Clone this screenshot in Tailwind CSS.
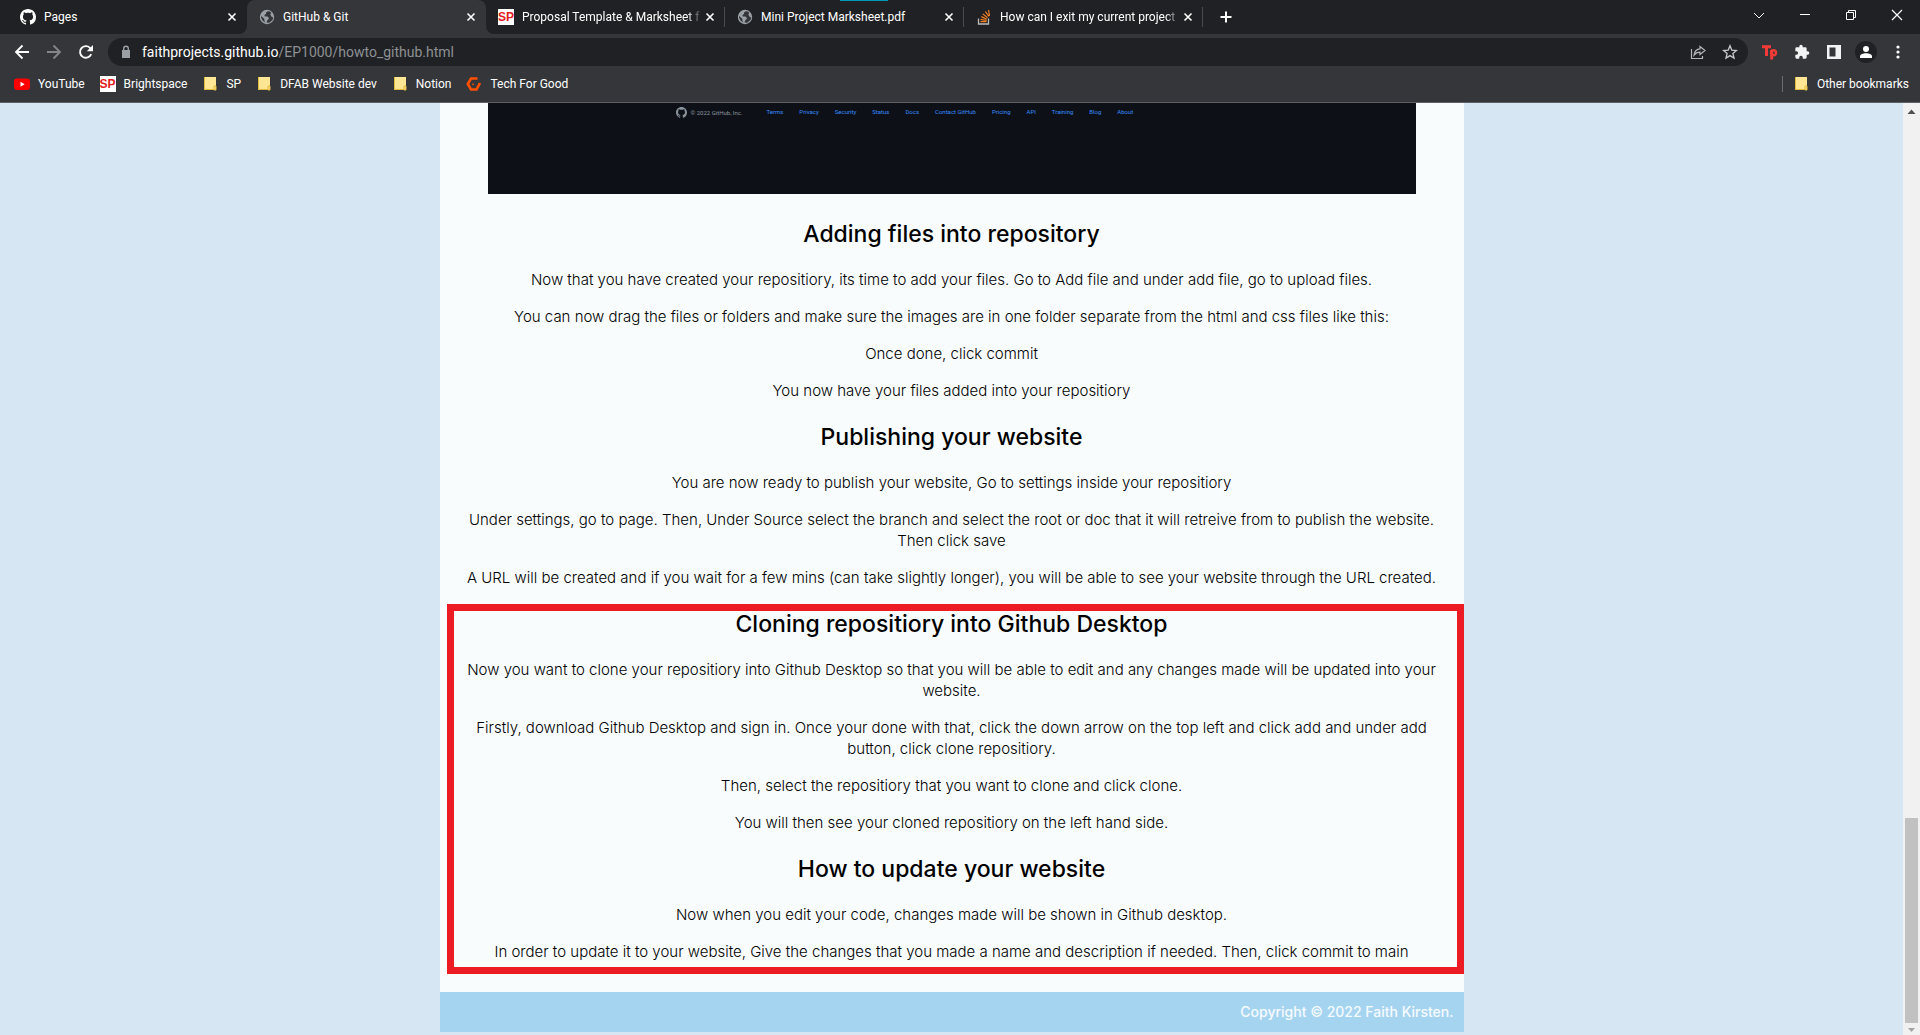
<!DOCTYPE html>
<html lang="en">
<head>
<meta charset="utf-8">
<title>GitHub &amp; Git</title>
<script src="https://cdn.jsdelivr.net/npm/@tailwindcss/browser@4"></script>
</head>
<body class="flex h-screen flex-col overflow-hidden bg-[#d6e6f3] font-[Roboto,sans-serif] text-xs text-white">
<svg class="hidden">
  <symbol id="octocat" viewBox="0 0 16 16"><path d="M8 0C3.58 0 0 3.58 0 8c0 3.54 2.29 6.53 5.47 7.59.4.07.55-.17.55-.38 0-.19-.01-.82-.01-1.49-2.01.37-2.53-.49-2.69-.94-.09-.23-.48-.94-.82-1.13-.28-.15-.68-.52-.01-.53.63-.01 1.08.58 1.23.82.72 1.21 1.87.87 2.33.66.07-.52.28-.87.51-1.07-1.78-.2-3.64-.89-3.64-3.95 0-.87.31-1.59.82-2.15-.08-.2-.36-1.02.08-2.12 0 0 .67-.21 2.2.82.64-.18 1.32-.27 2-.27s1.36.09 2 .27c1.53-1.04 2.2-.82 2.2-.82.44 1.1.16 1.92.08 2.12.51.56.82 1.27.82 2.15 0 3.07-1.87 3.75-3.65 3.95.29.25.54.73.54 1.48 0 1.07-.01 1.93-.01 2.2 0 .21.15.46.55.38A8.01 8.01 0 0 0 16 8c0-4.42-3.58-8-8-8z"/></symbol>
  <symbol id="globe" viewBox="0 0 16 16"><circle cx="8" cy="8" r="7.2" fill="#9aa0a6"/><path d="M9 2.2 7 3.4v1.5L5.4 6l.4 1.4h2.6l1.4 1.4-.2 1.5-1.3.9-.8 2.4 2.6.1 3.4-2.6.7-2.7-1.6-.6-1.3-2.4 1-1.6-1.5-1.2zM2.2 7l3.3 3.1-.2 1.5 1 1.8-2.6-1.6L2 8.6z" fill="#35363a"/></symbol>
  <symbol id="close" viewBox="0 0 16 16"><path d="m4.5 4.5 7 7m0-7-7 7" stroke="#fff" stroke-width="1.6"/></symbol>
  <symbol id="folder" viewBox="0 0 16 16"><path d="M2 1h12v13H2z" fill="#ffe694"/><path d="M2.5 1v12.5h9M12 10v4h2v-4z" fill="none" stroke="#e3b93c"/></symbol>
</svg>
<header class="shrink-0 border-b border-[#5f6064] bg-[#35363a]">
  <div class="relative flex h-[34px] bg-[#35363a]">
    <span class="absolute left-[840px] top-0 h-px w-12 bg-[#0099bc]"></span>
    <div class="flex w-[247px] items-center gap-2 rounded-br-lg bg-[#202124] pl-5 pr-[7px]">
      <svg class="size-4 fill-white"><use href="#octocat"/></svg>
      <span class="flex-1 overflow-hidden whitespace-nowrap">Pages</span>
      <button aria-label="Close tab"><svg class="size-4"><use href="#close"/></svg></button>
    </div>
    <div class="bg-[#202124]">
      <div class="flex h-full w-[239px] items-center gap-2 rounded-t-lg bg-[#35363a] pl-3 pr-[7px]">
        <svg class="size-4"><use href="#globe"/></svg>
        <span class="flex-1 overflow-hidden whitespace-nowrap">GitHub &amp; Git</span>
        <button aria-label="Close tab"><svg class="size-4"><use href="#close"/></svg></button>
      </div>
    </div>
    <div class="flex flex-1 rounded-bl-lg bg-[#202124]">
      <div class="flex w-[239px] items-center gap-2 pl-3 pr-[7px]">
        <span class="flex size-4 items-center justify-center bg-white font-['Liberation_Sans',sans-serif] text-xs font-bold text-[#e31b23]">SP</span>
        <span class="-mr-2 flex-1 overflow-hidden whitespace-nowrap mask-r-from-92%">Proposal Template &amp; Marksheet f</span>
        <button aria-label="Close tab"><svg class="size-4"><use href="#close"/></svg></button>
      </div>
      <span class="-ml-px h-5 w-px self-center bg-[#4a4b4f]"></span>
      <div class="flex w-[239px] items-center gap-2 pl-3 pr-[7px]">
        <svg class="size-4"><use href="#globe"/></svg>
        <span class="flex-1 overflow-hidden whitespace-nowrap">Mini Project Marksheet.pdf</span>
        <button aria-label="Close tab"><svg class="size-4"><use href="#close"/></svg></button>
      </div>
      <span class="-ml-px h-5 w-px self-center bg-[#4a4b4f]"></span>
      <div class="flex w-[239px] items-center gap-2 pl-3 pr-[7px]">
        <svg class="size-4" viewBox="0 0 16 16" fill="none"><path d="M2.500 9.500V15h10V9.500" stroke="#bcbbbb" stroke-width="1.300"/><path d="M4.500 12.700h6M4.600 10.300l6 1.200M5.300 7.600l5.500 2.600M6.800 4.900l4.700 3.900M9.300 2.500l3.600 4.900M12.500 1l1 6" stroke="#f48024" stroke-width="1.200"/></svg>
        <span class="-mr-2 flex-1 overflow-hidden whitespace-nowrap mask-r-from-92%">How can I exit my current project</span>
        <button aria-label="Close tab"><svg class="size-4"><use href="#close"/></svg></button>
      </div>
      <span class="-ml-px h-5 w-px self-center bg-[#4a4b4f]"></span>
      <button aria-label="New tab" class="ml-[15px]"><svg class="size-4" viewBox="0 0 16 16"><path d="M8 2.500v11M2.500 8h11" stroke="#fff" stroke-width="2"/></svg></button>
      <div class="ml-auto flex items-center gap-[30px] pr-[15px]">
        <button aria-label="Search tabs"><svg class="size-4" viewBox="0 0 16 16" fill="none" stroke="#fff"><path d="m3 4 5 5 5-5"/></svg></button>
        <button aria-label="Minimize"><svg class="size-4" viewBox="0 0 16 16" stroke="#fff"><path d="M3 5.500h10"/></svg></button>
        <button aria-label="Restore"><svg class="size-4" viewBox="0 0 16 16" fill="none" stroke="#fff"><path d="M3.500 3.500h7v7h-7zM5.500 3.500v-2h7v7h-2"/></svg></button>
        <button aria-label="Close"><svg class="size-4" viewBox="0 0 16 16" stroke="#fff" stroke-width="1.200"><path d="m3 1 10 10M13 1 3 11"/></svg></button>
      </div>
    </div>
  </div>
  <div class="flex h-9 items-center gap-4 px-[14px]">
    <button aria-label="Back"><svg class="size-4" viewBox="0 0 16 16" fill="none" stroke="#fff" stroke-width="1.800"><path d="M15 8H2M8.500 1.500 2 8l6.500 6.500"/></svg></button>
    <button aria-label="Forward"><svg class="size-4" viewBox="0 0 16 16" fill="none" stroke="#85868a" stroke-width="1.800"><path d="M1 8h13M7.500 1.500 14 8l-6.500 6.500"/></svg></button>
    <button aria-label="Reload"><svg class="size-4" viewBox="0 0 16 16"><path d="M13.200 10.200A5.800 5.800 0 1 1 12 3.900l1.500 1.600" fill="none" stroke="#fff" stroke-width="1.900"/><path d="M15 1v6.200H8.800z" fill="#fff"/></svg></button>
    <div class="-ml-0.5 flex h-7 flex-1 items-center rounded-full bg-[#202124] px-[10px]">
      <svg class="size-4" viewBox="0 0 16 16"><path d="M4 6h8v8H4z" fill="#9aa0a6"/><path d="M5.700 6.500V4.600a2.300 2.300 0 0 1 4.600 0v1.900" fill="none" stroke="#9aa0a6" stroke-width="1.400"/></svg>
      <span class="ml-2 flex-1 text-sm text-[#8d9094]"><span class="text-white">faithprojects.github.io</span>/EP1000/howto_github.html</span>
      <button aria-label="Share" class="mr-4"><svg class="size-4" viewBox="0 0 16 16" fill="none" stroke="#b4b7ba" stroke-width="1.200"><path d="M1.500 5v9.500h11V12"/><path d="M10 2.500 15 6.500l-5 4V8.200c-3 0-4.500 1-6 3 .4-3.500 2.400-6 6-6.300z"/></svg></button>
      <button aria-label="Bookmark"><svg class="size-4" viewBox="0 0 16 16" fill="none" stroke="#c6c8ca" stroke-width="1.300"><path d="m8 1.800 1.800 4.300 4.600.4-3.500 3 1.100 4.600-4-2.500-4 2.500 1.100-4.600-3.500-3 4.600-.4z"/></svg></button>
    </div>
    <button aria-label="Tp extension" class="-ml-[2px]"><svg class="size-4" viewBox="0 0 16 16" fill="none" stroke="#f23b36" stroke-width="3"><path d="M0 2.700h9M4.500 2v10M9.700 6v9.500"/><circle cx="11.500" cy="8.800" r="2.500" stroke-width="2.400"/></svg></button>
    <button aria-label="Extensions"><svg class="size-4" viewBox="0 0 24 24" fill="#f1f3f4"><path d="M20.500 11H19V7a2 2 0 0 0-2-2h-4V3.500a2.500 2.500 0 0 0-5 0V5H4a2 2 0 0 0-2 2v3.800h1.500a2.700 2.700 0 0 1 0 5.400H2V20a2 2 0 0 0 2 2h3.800v-1.500a2.700 2.700 0 0 1 5.400 0V22H17a2 2 0 0 0 2-2v-4h1.500a2.500 2.500 0 0 0 0-5z"/></svg></button>
    <button aria-label="Side panel"><svg class="size-4" viewBox="0 0 16 16"><path d="M1 1h14v14H1z" fill="#f1f3f4"/><path d="M3.500 3.500h6v9h-6z" fill="#35363a"/></svg></button>
    <button aria-label="Profile" class="-mx-[3px]"><svg class="size-[22px]" viewBox="0 0 22 22"><circle cx="11" cy="11" r="11" fill="#202124"/><circle cx="11" cy="8" r="3" fill="#fff"/><path d="M5 17v-1.500c0-2 3-3.200 6-3.200s6 1.200 6 3.200V17z" fill="#fff"/></svg></button>
    <button aria-label="Menu"><svg class="size-4 fill-white" viewBox="0 0 16 16"><circle cx="8" cy="3" r="1.600"/><circle cx="8" cy="8" r="1.600"/><circle cx="8" cy="13" r="1.600"/></svg></button>
  </div>
  <nav class="flex h-8 items-center gap-[15px] whitespace-nowrap pb-1 pl-[14px] pr-[11px]">
    <a href="#" class="flex items-center gap-2"><svg class="size-4" viewBox="0 0 16 16"><rect y="2.500" width="16" height="11.500" rx="3" fill="#f00"/><path d="m6.500 5.800 4.200 2.500-4.200 2.500z" fill="#fff"/></svg>YouTube</a>
    <a href="#" class="flex items-center gap-2"><span class="flex size-4 items-center justify-center bg-white font-['Liberation_Sans',sans-serif] text-xs font-bold text-[#e31b23]">SP</span>Brightspace</a>
    <a href="#" class="flex items-center gap-2"><svg class="size-4"><use href="#folder"/></svg>SP</a>
    <a href="#" class="flex items-center gap-2"><svg class="size-4"><use href="#folder"/></svg>DFAB Website dev</a>
    <a href="#" class="flex items-center gap-2"><svg class="size-4"><use href="#folder"/></svg>Notion</a>
    <a href="#" class="flex items-center gap-2"><svg class="size-4" viewBox="0 0 16 16" fill="none" stroke="#ff4f00" stroke-width="2.600"><path d="M11.500 2.500H5L1.800 8 5 13.500h5.500L14 7"/><circle cx="7" cy="8.300" r=".6" stroke-width="1"/></svg>Tech For Good</a>
    <a href="#" class="ml-auto flex items-center gap-2 border-l border-[#6b6c70] pl-[10px]"><svg class="size-4"><use href="#folder"/></svg>Other bookmarks</a>
  </nav>
</header>
<div class="flex min-h-0 flex-1">
  <main class="flex-1 overflow-hidden">
    <div class="mx-auto max-w-[1024px] bg-[#f8fcfd] text-center font-[Inter,sans-serif] text-[15px]/[21px] font-light text-black">
      <div class="mx-12 flex h-[91px] items-start gap-4 whitespace-nowrap bg-[#0d1117] pl-[188px] pt-1 font-[Roboto,sans-serif] text-[6px]/[10px] font-normal text-[#388bfd]">
        <span class="mr-2 flex items-center gap-1 text-[#8b949e]"><svg class="size-[11px] fill-[#8b949e]"><use href="#octocat"/></svg>© 2022 GitHub, Inc.</span>
        <a href="#">Terms</a><a href="#">Privacy</a><a href="#">Security</a><a href="#">Status</a><a href="#">Docs</a><a href="#">Contact GitHub</a><a href="#">Pricing</a><a href="#">API</a><a href="#">Training</a><a href="#">Blog</a><a href="#">About</a>
      </div>
      <section class="space-y-4 pt-[25px]">
        <h2 class="mb-5 text-[23px]/[30px] font-medium">Adding files into repository</h2>
        <p>Now that you have created your repositiory, its time to add your files. Go to Add file and under add file, go to upload files.</p>
        <p>You can now drag the files or folders and make sure the images are in one folder separate from the html and css files like this:</p>
        <p>Once done, click commit</p>
        <p>You now have your files added into your repositiory</p>
      </section>
      <section class="space-y-4 pt-[21px]">
        <h2 class="mb-5 text-[23px]/[30px] font-medium">Publishing your website</h2>
        <p>You are now ready to publish your website, Go to settings inside your repositiory</p>
        <p>Under settings, go to page. Then, Under Source select the branch and select the root or doc that it will retreive from to publish the website.<br>Then click save</p>
        <p>A URL will be created and if you wait for a few mins (can take slightly longer), you will be able to see your website through the URL created.</p>
      </section>
      <div class="relative mt-4 pb-3">
        <span class="absolute inset-y-0 left-[7px] right-0 border-[7px] border-[#ed1c24]"></span>
        <section class="space-y-4 pt-[5px]">
          <h2 class="mb-5 text-[23px]/[30px] font-medium">Cloning repositiory into Github Desktop</h2>
          <p>Now you want to clone your repositiory into Github Desktop so that you will be able to edit and any changes made will be updated into your<br>website.</p>
          <p>Firstly, download Github Desktop and sign in. Once your done with that, click the down arrow on the top left and click add and under add<br>button, click clone repositiory.</p>
          <p>Then, select the repositiory that you want to clone and click clone.</p>
          <p>You will then see your cloned repositiory on the left hand side.</p>
        </section>
        <section class="space-y-4 pt-[21px]">
          <h2 class="mb-5 text-[23px]/[30px] font-medium">How to update your website</h2>
          <p>Now when you edit your code, changes made will be shown in Github desktop.</p>
          <p>In order to update it to your website, Give the changes that you made a name and description if needed. Then, click commit to main</p>
        </section>
      </div>
      <footer class="mt-[18px] flex h-10 items-center justify-end bg-[#a5d4f1] pr-[10px] text-sm font-medium text-white/90">Copyright © 2022 Faith Kirsten.</footer>
    </div>
  </main>
  <div class="flex w-[17px] flex-col items-center justify-between bg-[#f1f1f1]">
    <svg class="h-[17px] w-[17px] shrink-0" viewBox="0 0 17 17"><path d="m4.500 11 4-4.500 4 4.500z" fill="#505050"/></svg>
    <div class="mt-auto h-[205px] w-[13px] bg-[#c1c1c1]"></div>
    <svg class="h-3 w-[17px] shrink-0" viewBox="0 0 17 12"><path d="m5 5 3.500 4L12 5z" fill="#a3a3a3"/></svg>
  </div>
</div>
</body>
</html>
